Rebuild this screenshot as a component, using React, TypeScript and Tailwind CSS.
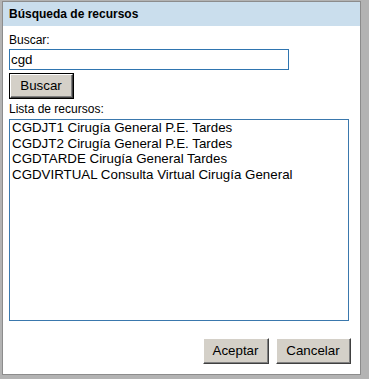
import React from "react";

const items = [
  "CGDJT1 Cirugía General P.E. Tardes",
  "CGDJT2 Cirugía General P.E. Tardes",
  "CGDTARDE Cirugía General Tardes",
  "CGDVIRTUAL Consulta Virtual Cirugía General",
];

function Btn({ label, w, focused }: { label: string; w: string; focused?: boolean }) {
  return (
    <div className={`${w} h-[26px] ${focused ? "border border-black" : ""} flex`}>
      <div className="flex-1 flex border-t border-l border-t-white border-l-white border-r border-b border-r-[#404040] border-b-[#404040]">
        <div className="flex-1 flex items-center justify-center bg-[#d4d0c8] border-r border-b border-r-[#808080] border-b-[#808080] text-[13.33px] text-black">
          {label}
        </div>
      </div>
    </div>
  );
}

export default function App() {
  return (
    <div
      className="w-[369px] h-[379px] bg-[#b3b3b3] pl-[2px] pt-[1px]"
      style={{ fontFamily: '"Liberation Sans", Arial, sans-serif' }}
    >
      <div className="w-[359px] h-[374px] border border-[#8c8c8c] bg-white flex flex-col">
        <div className="h-[24px] bg-[#cadeed] pl-[6px] flex items-center text-[12px] font-bold text-black">
          Búsqueda de recursos
        </div>
        <div className="pl-[6px] flex flex-col">
          <div className="mt-[7px] h-[15px] text-[12px] leading-[15px] text-black">Buscar:</div>
          <div className="mt-[1px] w-[280px] h-[21px] border border-[#2f75b0] flex items-center pl-[1px] text-[13.33px] text-black">
            cgd
          </div>
          <div className="mt-[3px]">
            <Btn label="Buscar" w="w-[65px]" focused />
          </div>
          <div className="mt-[2px] h-[16px] text-[12px] leading-[16px] text-black">Lista de recursos:</div>
          <div className="mt-[2px] w-[340px] h-[202px] border border-[#3a78ad] pl-[2px] text-[13.33px] leading-[15.6px] text-black">
            {items.map((t) => (
              <div key={t}>{t}</div>
            ))}
          </div>
        </div>
        <div className="mt-[17px] flex justify-end gap-[7px] pr-[9px]">
          <Btn label="Aceptar" w="w-[66px]" />
          <Btn label="Cancelar" w="w-[75px]" />
        </div>
      </div>
    </div>
  );
}
